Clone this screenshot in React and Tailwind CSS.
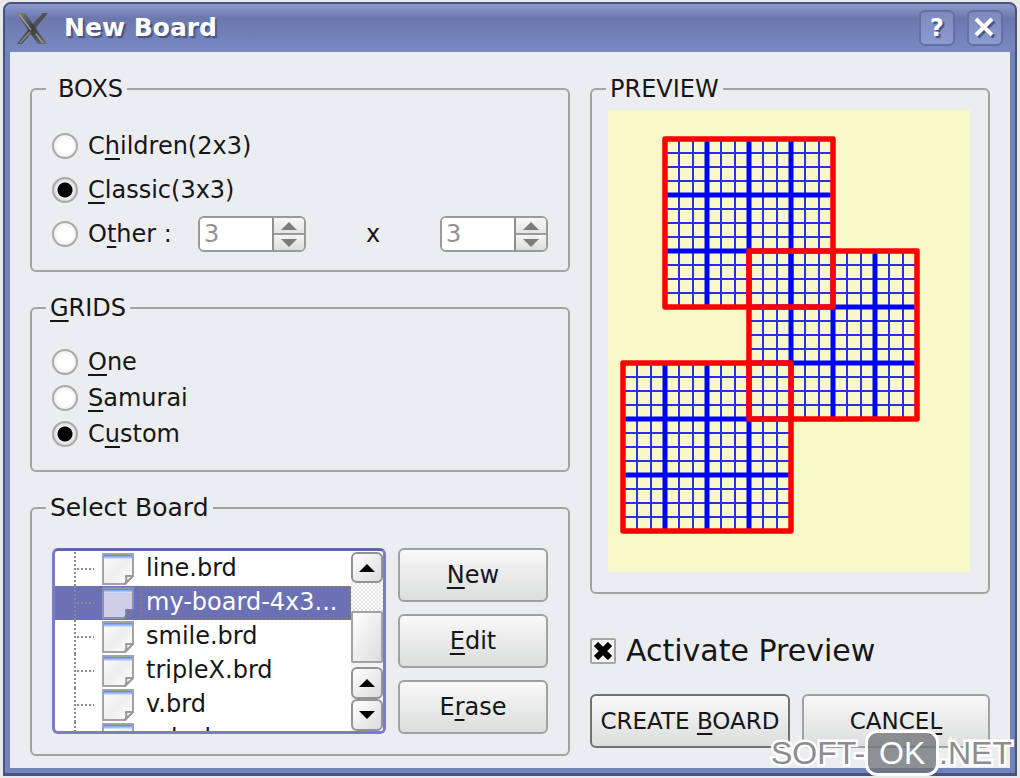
import React, { useState } from "react";
import clsx from "clsx";

const boards = ["line.brd", "my-board-4x3...", "smile.brd", "tripleX.brd", "v.brd", "w.brd"];

const CELL = 14;
const grids = [
  { x: 57, y: 29 },
  { x: 141, y: 141 },
  { x: 15, y: 253 },
];

// Underlined shortcut letter
const Key = ({ children }) => (
  <span className="underline decoration-2 underline-offset-4 [text-decoration-skip-ink:none]">
    {children}
  </span>
);

const Group = ({ legend, legendClass = "-ml-1.5 px-1", className, children }) => (
  <fieldset className={clsx("min-w-0 rounded-md border-2 border-[#a2a3a4]", className)}>
    <legend className={clsx("text-2xl leading-7", legendClass)}>{legend}</legend>
    {children}
  </fieldset>
);

const Radio = ({ name, value, current, onChange, className, children }) => (
  <label className={clsx("flex h-9 items-center gap-2.5 whitespace-nowrap", className)}>
    <input
      type="radio"
      name={name}
      checked={current === value}
      onChange={() => onChange(value)}
      className="size-[26px] shrink-0 appearance-none rounded-full border-2 border-[#a9aaab] bg-[radial-gradient(circle,#ffffff_0_7px,#ececec_12px)] checked:bg-[radial-gradient(circle,#000000_0_7px,#f4f4f4_8px,#d8d8d8_11px)]"
    />
    <span>{children}</span>
  </label>
);

const Arrow = ({ down = false, className }) => (
  <svg viewBox="0 0 16 8" className={clsx("h-2 w-4", className)} fill="currentColor" aria-hidden="true">
    <path d={down ? "M0 0H16L8 8Z" : "M0 8H16L8 0Z"} />
  </svg>
);

const Spinner = ({ label }) => (
  <div className="flex h-9 w-[108px] shrink-0 overflow-hidden rounded-md border-2 border-[#999a9b] bg-white">
    <input
      type="text"
      aria-label={label}
      defaultValue="3"
      disabled
      className="w-0 flex-1 bg-white pl-1 text-2xl leading-7 text-[#929292]"
    />
    <div className="flex w-8 flex-col border-l-2 border-[#8e8f90] text-[#7b7c7d]">
      <button
        type="button"
        aria-label={`Increase ${label}`}
        disabled
        className="flex flex-1 items-center justify-center border-b-2 border-[#999a9b] bg-linear-to-b from-[#f7f7f7] to-[#e4e4e4]"
      >
        <Arrow />
      </button>
      <button
        type="button"
        aria-label={`Decrease ${label}`}
        disabled
        className="flex flex-1 items-center justify-center bg-linear-to-b from-[#f5f5f5] to-[#dddddd]"
      >
        <Arrow down />
      </button>
    </div>
  </div>
);

const PushButton = ({ className, children }) => (
  <button
    type="button"
    className={clsx(
      "flex h-[54px] items-center justify-center rounded-md border-2 bg-linear-to-b from-[#f9f9fa] to-[#dcdddd] whitespace-nowrap",
      className
    )}
  >
    <span>{children}</span>
  </button>
);

const FileIcon = ({ selected }) => (
  <svg viewBox="0 0 32 32" className="size-8 shrink-0" aria-hidden="true">
    <defs>
      <linearGradient id="sheet" x1="0" y1="0" x2="1" y2="1">
        <stop offset="0" stopColor="#ffffff" />
        <stop offset="0.5" stopColor="#eeeeee" />
        <stop offset="1" stopColor="#ffffff" />
      </linearGradient>
      <linearGradient id="sheetTop" x1="0" y1="0" x2="0" y2="1">
        <stop offset="0" stopColor="#5580ee" />
        <stop offset="1" stopColor="#dfe8ff" />
      </linearGradient>
    </defs>
    <path
      d="M1 1H31V23L23 31H1Z"
      fill={selected ? "#cfcde8" : "url(#sheet)"}
      stroke={selected ? "#8d8eb4" : "#a3a3a3"}
      strokeWidth="2"
    />
    <path d="M2 2H30V6H2Z" fill="url(#sheetTop)" />
    <path
      d="M31 23H24Q25 28 23 31Z"
      fill={selected ? "#6f72b8" : "#f4f4f4"}
      stroke={selected ? "#77799f" : "#9b9b9b"}
      strokeWidth="2"
      strokeLinejoin="round"
    />
  </svg>
);

const TreeLines = () => (
  <svg viewBox="0 0 47 34" className="h-[34px] w-[47px] shrink-0" aria-hidden="true">
    <path d="M20 0V34M22 17H39" stroke="#8b8b8b" strokeWidth="2" strokeDasharray="2 2" />
  </svg>
);

const scrollButton =
  "flex shrink-0 items-center justify-center rounded-md border-2 border-[#929394] bg-linear-to-br from-[#ffffff] to-[#dcdcdc] text-black";

const BoardList = () => {
  const [selected, setSelected] = useState("my-board-4x3...");

  return (
    <div className="flex h-[186px] min-w-0 flex-1 overflow-hidden rounded-md border-[3px] border-[#7b7ec6] border-t-[#6065ad] bg-white pt-px">
      <ul role="listbox" aria-label="Boards" className="min-w-0 flex-1 overflow-hidden">
        {boards.map((board) => (
          <li
            key={board}
            role="option"
            aria-selected={board === selected}
            onClick={() => setSelected(board)}
            className={clsx(
              "flex h-[34px] items-center",
              board === selected && "bg-[#6c70b5] text-white"
            )}
          >
            <TreeLines />
            <FileIcon selected={board === selected} />
            <span
              className={clsx(
                "ml-1.5 h-[34px] min-w-0 flex-1 overflow-hidden border-2 pl-1 leading-7 whitespace-nowrap",
                board === selected ? "border-dotted border-[#85805f]" : "border-transparent"
              )}
            >
              {board}
            </span>
          </li>
        ))}
      </ul>
      <div className="flex w-8 flex-col bg-[#f3f3f3]">
        <button type="button" aria-label="Scroll up" className={clsx(scrollButton, "h-[31px]")}>
          <Arrow />
        </button>
        <div className="h-7 shrink-0 bg-[repeating-conic-gradient(#ffffff_0_25%,#e4e4e4_0_50%)] bg-size-[4px_4px]" />
        <div className="h-[52px] shrink-0 rounded-xs border-2 border-[#a1a2a3] bg-linear-to-br from-white to-[#dddddd]" />
        <div className="flex-1" />
        <button type="button" aria-label="Scroll up one line" className={clsx(scrollButton, "h-8")}>
          <Arrow />
        </button>
        <button type="button" aria-label="Scroll down" className={clsx(scrollButton, "h-8")}>
          <Arrow down />
        </button>
      </div>
    </div>
  );
};

const steps = Array.from({ length: 11 }, (_, i) => i + 1);

const BoardPreview = ({ active }) => (
  <svg viewBox="0 0 362 462" className="block w-full bg-[#f9f8c8]" role="img" aria-label="Board preview">
    {active && (
      <>
        {grids.map(({ x, y }) => (
          <g key={`${x}-${y}`} stroke="#2d2df2" strokeWidth="2">
            {steps.map((n) => (
              <path key={n} d={`M${x + n * CELL} ${y}v168M${x} ${y + n * CELL}h168`} />
            ))}
          </g>
        ))}
        {grids.map(({ x, y }) => (
          <path
            key={`${x}-${y}`}
            d={`M${x + 42} ${y}v168M${x + 84} ${y}v168M${x + 126} ${y}v168M${x} ${y + 56}h168M${x} ${y + 112}h168`}
            stroke="#0000ff"
            strokeWidth="5"
          />
        ))}
        {grids.map(({ x, y }) => (
          <rect
            key={`${x}-${y}`}
            x={x}
            y={y}
            width="168"
            height="168"
            fill="none"
            stroke="#ff0000"
            strokeWidth="5.5"
            strokeLinejoin="round"
          />
        ))}
      </>
    )}
  </svg>
);

const titleButton =
  "flex size-9 items-center justify-center rounded-md border-2 border-[#6370a8] bg-linear-to-b from-[#7f8abb] to-[#8b9ad0] text-white";

const TitleBar = () => (
  <header className="flex h-12 items-center bg-linear-to-b from-[#8e9acb] via-[#6b78ae] via-30% to-[#7889c2] pr-3 pl-[11px]">
    <svg viewBox="0 0 32 32" className="size-8" aria-hidden="true">
      <defs>
        <linearGradient id="xmetal" x1="0" y1="0" x2="1" y2="1">
          <stop offset="0" stopColor="#858585" />
          <stop offset="0.5" stopColor="#3a3c3e" />
          <stop offset="1" stopColor="#6d6d6d" />
        </linearGradient>
      </defs>
      <path d="M27 1H32L19 17L6 32H1L14 15Z" fill="#4f5153" />
      <path d="M0 1H9L31 32H22Z" fill="url(#xmetal)" />
      <path d="M3 2L15 18M20 22L27 31" fill="none" stroke="#98989a" strokeWidth="1.5" />
      <path d="M14 20L4 31" fill="none" stroke="#85868a" strokeWidth="1.5" />
    </svg>
    <h1 className="ml-4 flex-1 text-[25px] leading-8 font-bold text-white [text-shadow:2px_2px_1px_#46527f]">
      New Board
    </h1>
    <div className="flex gap-3">
      <button
        type="button"
        className={clsx(titleButton, "text-2xl font-bold [text-shadow:2px_2px_1px_#46527f]")}
      >
        ?
      </button>
      <button type="button" aria-label="Close" className={titleButton}>
        <svg viewBox="0 0 22 22" className="size-[22px]" fill="none" strokeWidth="4" aria-hidden="true">
          <path d="M4 4L20 20M20 4L4 20" stroke="#4a5686" />
          <path d="M2 2L18 18M18 2L2 18" stroke="#ffffff" />
        </svg>
      </button>
    </div>
  </header>
);

const Watermark = () => (
  <div className="pointer-events-none absolute right-2 bottom-0.5 flex items-center font-['Liberation_Sans',Arial,sans-serif] text-[32px] leading-10 text-[#8c8d8e]">
    <span className="[-webkit-text-stroke:5px_white] [paint-order:stroke_fill]">SOFT-</span>
    <span className="flex h-[46px] w-[74px] items-center justify-center rounded-xl border-[3px] border-white bg-[#6d7075]/75 text-white">
      OK
    </span>
    <span className="[-webkit-text-stroke:5px_white] [paint-order:stroke_fill]">.NET</span>
  </div>
);

const App = () => {
  const [box, setBox] = useState("classic");
  const [grid, setGrid] = useState("custom");
  const [preview, setPreview] = useState(true);

  return (
    <div className="relative min-h-screen bg-[#e9e9e9] px-[3px] pt-0.5 pb-0.5 font-['DejaVu_Sans',sans-serif] text-2xl text-[#161616]">
      <div className="overflow-hidden rounded-t-lg border-x-2 border-b-[3px] border-[#47537f] border-t-2 bg-[#7282bb]">
        <TitleBar />
        <main className="mx-[5px] mb-[5px] grid grid-cols-[27fr_20fr] gap-5 bg-[#ecedf0] px-5 pt-[23px] pb-3">
          <div className="flex min-w-0 flex-col gap-[22px]">
            <Group legend="BOXS" legendClass="-ml-1.5 pl-3 pr-1" className="px-5 pt-[25px] pb-[18px]">
              <div className="flex flex-col gap-2">
                <Radio name="box" value="children" current={box} onChange={setBox}>
                  C<Key>h</Key>ildren(2x3)
                </Radio>
                <Radio name="box" value="classic" current={box} onChange={setBox}>
                  <Key>C</Key>lassic(3x3)
                </Radio>
                <div className="flex items-center">
                  <Radio name="box" value="other" current={box} onChange={setBox} className="w-[146px]">
                    O<Key>t</Key>her :
                  </Radio>
                  <Spinner label="Columns" />
                  <span className="flex-1 text-center">x</span>
                  <Spinner label="Rows" />
                </div>
              </div>
            </Group>

            <Group legend={<><Key>G</Key>RIDS</>} className="px-5 pt-[22px] pb-[18px]">
              <Radio name="grid" value="one" current={grid} onChange={setGrid}>
                <Key>O</Key>ne
              </Radio>
              <Radio name="grid" value="samurai" current={grid} onChange={setGrid}>
                <Key>S</Key>amurai
              </Radio>
              <Radio name="grid" value="custom" current={grid} onChange={setGrid}>
                C<Key>u</Key>stom
              </Radio>
            </Group>

            <Group legend="Select Board" legendClass="-ml-1.5 px-1 text-[25px]" className="px-5 pt-[26px] pb-5">
              <div className="flex gap-3">
                <BoardList />
                <div className="flex w-[150px] shrink-0 flex-col gap-3">
                  <PushButton className="border-[#a0a1a2]"><Key>N</Key>ew</PushButton>
                  <PushButton className="border-[#a0a1a2]"><Key>E</Key>dit</PushButton>
                  <PushButton className="border-[#a0a1a2]">E<Key>r</Key>ase</PushButton>
                </div>
              </div>
            </Group>
          </div>

          <div className="min-w-0">
            <Group legend="PREVIEW" legendClass="-ml-0.5 px-1" className="pt-[7px] pr-[18px] pb-5 pl-4">
              <BoardPreview active={preview} />
            </Group>

            <label className="mt-[39px] flex h-9 items-center gap-2.5 text-3xl whitespace-nowrap">
              <span className="grid shrink-0 place-items-center">
                <input
                  type="checkbox"
                  checked={preview}
                  onChange={(e) => setPreview(e.target.checked)}
                  className="peer col-start-1 row-start-1 size-[26px] appearance-none rounded-xs border-2 border-[#a5a6a7] bg-[#f4f4f4]"
                />
                <svg
                  viewBox="0 0 18 18"
                  className="pointer-events-none invisible col-start-1 row-start-1 size-[18px] peer-checked:visible"
                  aria-hidden="true"
                >
                  <path d="M2 2L16 16M16 2L2 16" stroke="#000000" strokeWidth="6" />
                </svg>
              </span>
              Activate Preview
            </label>

            <div className="mt-[25px] flex gap-3 text-[23px]">
              <PushButton className="w-[200px] border-[#6f7071]">
                CREATE <Key>B</Key>OARD
              </PushButton>
              <PushButton className="flex-1 border-[#a0a1a2]">
                CANCE<Key>L</Key>
              </PushButton>
            </div>
          </div>
        </main>
      </div>
      <Watermark />
    </div>
  );
};

export default App;
